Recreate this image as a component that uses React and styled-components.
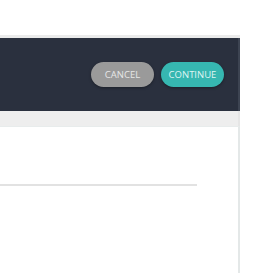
import React from 'react'
import styled, { createGlobalStyle } from 'styled-components';

const Global = createGlobalStyle`
  html, body {
    margin: 0;
    padding: 0;
    background: #ffffff;
    font-family: "Open Sans", "Liberation Sans", sans-serif;
  }
`

const Page = styled.div`
  width: 273px;
  height: 273px;
  overflow: hidden;
  padding-top: 35px;
  box-sizing: border-box;
`

const Modal = styled.div`
  width: 240px;
  display: flex;
  flex-direction: column;
  border-top: 3px solid #ebebeb;
`

const Header = styled.div`
  height: 73px;
  background: #2a303e;
  border-right: 2px solid #3d4452;
  display: flex;
  align-items: center;
  justify-content: flex-end;
  gap: 7px;
  padding-right: 14px;
`

const Button = styled.button`
  width: 63px;
  height: 25px;
  border: none;
  border-radius: 13px;
  padding: 0;
  font-family: "Open Sans", "Liberation Sans", sans-serif;
  font-size: 9.5px;
  letter-spacing: 0;
  color: ${p => p.$primary ? '#dff5f3' : '#e6e6e6'};
  background: ${p => p.$primary ? '#36b7b1' : '#9a9a9a'};
  box-shadow: 0 1px 3px rgba(0, 0, 0, 0.35);
`

const Band = styled.div`
  height: 15px;
  background: #eeeeee;
  border-right: 2px solid #e6e6e6;
`

const Body = styled.div`
  height: 147px;
  background: #ffffff;
  border-right: 2px solid #e4e8e8;
  border-top: 1px solid #e8ecec;
  padding-top: 57px;
  box-sizing: border-box;
`

const Rule = styled.div`
  width: 197px;
  height: 2px;
  background: #e2e2e2;
`

export default function App() {
  return (
    <Page>
      <Global />
      <Modal>
        <Header>
          <Button>CANCEL</Button>
          <Button $primary>CONTINUE</Button>
        </Header>
        <Band />
        <Body>
          <Rule />
        </Body>
      </Modal>
    </Page>
  )
}
